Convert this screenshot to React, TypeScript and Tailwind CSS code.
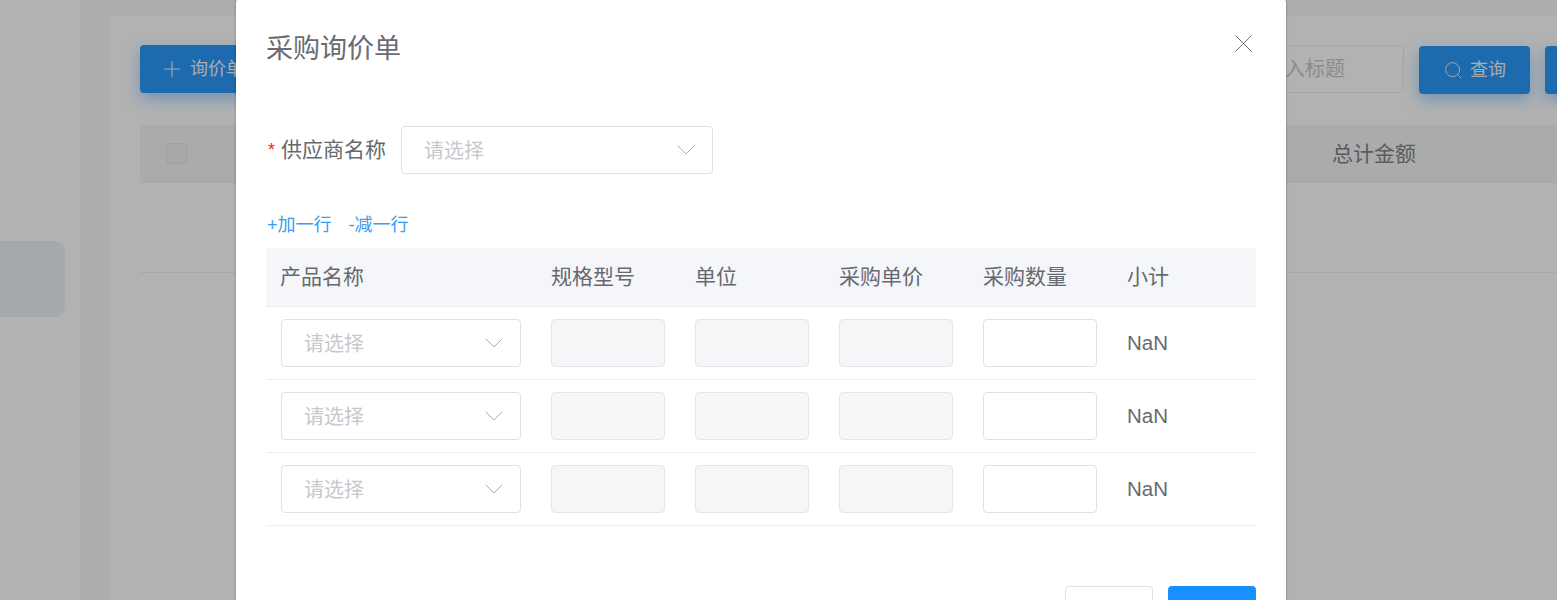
import React from "react";
import { Plus, Search, X, ChevronDown } from "lucide-react";

const font = "font-['Liberation_Sans','Noto_Sans_CJK_SC',sans-serif]";

function Select({ width }: { width: string }) {
  return (
    <div className={`${width} h-[48px] flex items-center justify-between border border-[#dfe1e5] rounded-[4px] bg-white pl-[23px] pr-[10px]`}>
      <span className="text-[20px] leading-[30px] pt-[2px] ml-[-1px] text-[#c6c8cc]">请选择</span>
      <ChevronDown size={32} strokeWidth={0.7} className="text-[#a6a8ad]" />
    </div>
  );
}

function Cell({ children }: { children?: React.ReactNode }) {
  return <div className="px-[15px] flex items-center">{children}</div>;
}

function Disabled() {
  return <div className="w-[114px] h-[48px] border border-[#e3e5e8] rounded-[4px] bg-[#f5f6f8]" />;
}

function Row() {
  return (
    <div className="grid grid-cols-[270px_144px_144px_144px_144px_144px] h-[73px] border-b border-[#ebeef5]">
      <Cell><Select width="w-[240px]" /></Cell>
      <Cell><Disabled /></Cell>
      <Cell><Disabled /></Cell>
      <Cell><Disabled /></Cell>
      <Cell><div className="w-[114px] h-[48px] border border-[#dfe1e5] rounded-[4px] bg-white" /></Cell>
      <Cell><span className="text-[20.5px] text-[#67696e]">NaN</span></Cell>
    </div>
  );
}

export default function App() {
  const heads = ["产品名称", "规格型号", "单位", "采购单价", "采购数量", "小计"];
  const blueBtn = "rounded-[4px] bg-[#2a98fb] text-[#f2f6fa] shadow-[0_6px_16px_rgba(24,144,255,0.4)]";
  return (
    <div className={`relative w-full h-[600px] overflow-hidden bg-white ${font}`}>
      {/* page behind the dialog */}
      <div className="flex h-full">
        <aside className="w-[80px] shrink-0 bg-white pt-[241px]">
          <div className="w-[65px] h-[76px] rounded-r-[10px] bg-[#ebf3fa]" />
        </aside>
        <div className="w-[30px] shrink-0 bg-[#f7f8f9]" />
        <main className="flex-1 min-w-0 overflow-hidden bg-[#f7f8f9] pt-[14px]">
          <div className="h-full bg-white border-t border-[#f2f2f2] pl-[30px] pt-[30px]">
            <div className="flex items-center w-[1600px] h-[48px]">
              <div className={`flex items-center gap-[5px] h-[48px] w-[160px] shrink-0 pl-[19px] text-[18px] ${blueBtn}`}>
                <Plus size={26} strokeWidth={1} />
                <span>询价单</span>
              </div>
              <div className="ml-[944px] shrink-0 w-[160px] h-[48px] border border-[#eceef0] rounded-[4px] flex items-center justify-end pr-[58px] text-[20px] text-[#c6c8cc] whitespace-nowrap">入标题</div>
              <div className={`ml-[15px] mt-[2px] shrink-0 w-[111px] h-[48px] flex items-center justify-center gap-[6px] text-[18px] ${blueBtn}`}>
                <Search size={21} strokeWidth={1} />
                <span>查询</span>
              </div>
              <div className={`ml-[15px] mt-[2px] w-[60px] shrink-0 h-[48px] ${blueBtn}`} />
            </div>
            <div className="mt-[32px] h-[58px] flex items-center bg-[#f5f5f7] border-b border-[#f0f1f4] pl-[26px] w-[1600px]">
              <div className="w-[21px] h-[21px] shrink-0 rounded-[3px] border border-[#e3e5ea] bg-[#f2f3f6]" />
              <span className="ml-[1145px] text-[21px] text-[#818388] whitespace-nowrap">总计金额</span>
            </div>
            <div className="h-[90px] border-b border-[#f0f1f4] w-[1600px]" />
          </div>
        </main>
      </div>
      <div className="absolute inset-0 bg-black/30" />

      {/* dialog */}
      <div className="absolute left-[236px] top-[-3px] w-[1050px] h-[700px] rounded-[6px] bg-white px-[30px] shadow-[0_1px_3px_rgba(0,0,0,0.3)]">
        <div className="flex items-start justify-between h-[129px] pt-[32px]">
          <h2 className="text-[27px] leading-[40px] text-[#686c74] font-normal">采购询价单</h2>
          <X size={31} strokeWidth={0.75} className="mt-[-1px] mr-[-3px] text-[#66686d]" />
        </div>
        <div className="flex items-center h-[48px]">
          <span className="ml-[2px] w-[13px] text-[18px] text-[#f5222d]">*</span>
          <span className="text-[21px] text-[#67696e] whitespace-nowrap">供应商名称</span>
          <div className="ml-[15px]"><Select width="w-[312px]" /></div>
        </div>
        <div className="flex items-center h-[26px] mt-[37px] pt-[2px] pl-[1px] gap-[17px] text-[18px] text-[#3a9bf0]">
          <span>+加一行</span>
          <span>-减一行</span>
        </div>
        <div className="mt-[11px] grid grid-cols-[270px_144px_144px_144px_144px_144px] h-[59px] bg-[#f5f6fa] border-b border-[#ebeef5]">
          {heads.map((h, i) => (
            <div key={h} className={`flex items-center pr-[15px] text-[21px] text-[#67696e] whitespace-nowrap ${i === 0 ? "pl-[14px]" : "pl-[15px]"}`}>{h}</div>
          ))}
        </div>
        <Row />
        <Row />
        <Row />
        <div className="flex justify-end gap-[15px] mt-[60px]">
          <div className="w-[88px] h-[48px] border border-[#dfe1e5] rounded-[4px] bg-white" />
          <div className="w-[88px] h-[48px] rounded-[4px] bg-[#1890ff]" />
        </div>
      </div>
    </div>
  );
}
